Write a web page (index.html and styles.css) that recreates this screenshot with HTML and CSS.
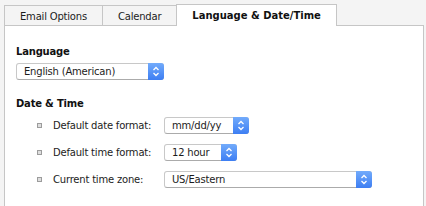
FILE: index.html
```html
<!DOCTYPE html>
<html>
<head>
<meta charset="utf-8">
<link rel="stylesheet" href="styles.css">
</head>
<body>
<div class="tabs">
  <div class="tab">Email Options</div>
  <div class="tab">Calendar</div>
  <div class="tab active">Language &amp; Date/Time</div>
</div>
<div class="panel">
  <h3 class="heading">Language</h3>
  <div class="select w-lang">
    <span class="value">English (American)</span>
    <span class="arrow"><svg width="16" height="17" viewBox="0 0 16 17"><polyline points="5.5,7 8,4.5 10.5,7" /><polyline points="5.5,10 8,12.5 10.5,10" /></svg></span>
  </div>
  <h3 class="heading section">Date &amp; Time</h3>
  <ul class="rows">
    <li class="row">
      <span class="label">Default date format:</span>
      <div class="select w-date">
        <span class="value">mm/dd/yy</span>
        <span class="arrow"><svg width="16" height="17" viewBox="0 0 16 17"><polyline points="5.5,7 8,4.5 10.5,7" /><polyline points="5.5,10 8,12.5 10.5,10" /></svg></span>
      </div>
    </li>
    <li class="row">
      <span class="label">Default time format:</span>
      <div class="select w-time">
        <span class="value">12 hour</span>
        <span class="arrow"><svg width="16" height="17" viewBox="0 0 16 17"><polyline points="5.5,7 8,4.5 10.5,7" /><polyline points="5.5,10 8,12.5 10.5,10" /></svg></span>
      </div>
    </li>
    <li class="row">
      <span class="label">Current time zone:</span>
      <div class="select w-zone">
        <span class="value">US/Eastern</span>
        <span class="arrow"><svg width="16" height="17" viewBox="0 0 16 17"><polyline points="5.5,7 8,4.5 10.5,7" /><polyline points="5.5,10 8,12.5 10.5,10" /></svg></span>
      </div>
    </li>
  </ul>
</div>
</body>
</html>
```
FILE: styles.css
```css
html, body {
  margin: 0;
  width: 426px;
  height: 206px;
  overflow: hidden;
}
body {
  background: #f4f4f4;
  font-family: "DejaVu Sans", sans-serif;
  font-size: 10px;
  line-height: 12px;
  letter-spacing: -0.2px;
  color: #1c1c1c;
  display: flex;
  flex-direction: column;
}
.tabs {
  display: flex;
  align-items: flex-end;
  padding: 4px 0 0 4px;
}
.tab {
  height: 19px;
  padding: 4px 15px 0;
  box-sizing: border-box;
  height: 20px;
  line-height: 13px;
  border-top: 1px solid #c6c6c6;
  border-left: 1px solid #c6c6c6;
  background: #f4f4f4;
}
.tab:last-child {
  border-right: 1px solid #c6c6c6;
}
.tab.active {
  height: 22px;
  padding-top: 4px;
  margin-bottom: -1px;
  background: #fff;
  font-weight: bold;
  letter-spacing: 0;
  color: #111;
  position: relative;
  z-index: 1;
}
.panel {
  flex: 1;
  margin: 0 2px 0 4px;
  background: #fff;
  border: 1px solid #c6c6c6;
  border-bottom: none;
  padding: 20px 11px 0;
}
.heading {
  margin: 0 0 5px;
  font-size: 10px;
  line-height: 12px;
  font-weight: bold;
  color: #111;
}
.heading.section {
  margin-top: 18px;
  margin-bottom: 0;
}
.select {
  display: flex;
  height: 17px;
  box-sizing: border-box;
  border: 1px solid #c8c8c8;
  border-bottom-color: #ababab;
  border-radius: 3px;
  background: #fff;
}
.select .value {
  flex: 1;
  padding-left: 7px;
  line-height: 15px;
  white-space: nowrap;
  overflow: hidden;
}
.arrow {
  width: 16px;
  height: 17px;
  margin: -1px -1px -1px 0;
  border-radius: 0 3px 3px 0;
  background: linear-gradient(#72abfb, #3d7ef3);
  display: flex;
}
.arrow polyline {
  fill: none;
  stroke: #fff;
  stroke-width: 1.3;
}
.w-lang { width: 148px; }
.w-date { width: 85px; }
.w-time { width: 73px; }
.w-zone { width: 208px; }
.rows {
  list-style: none;
  margin: 7px 0 0 21px;
  padding: 0;
}
.row {
  display: flex;
  align-items: center;
  height: 17px;
  margin-bottom: 10px;
}
.row::before {
  content: "";
  width: 3px;
  height: 3px;
  border: 1px solid #9c9c9c;
  background: #dedede;
  margin-right: 11px;
}
.label {
  width: 111px;
}
```
